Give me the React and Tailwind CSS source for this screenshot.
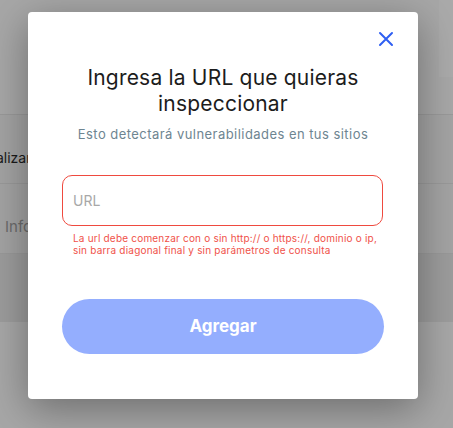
import React from 'react';

export default function App() {
    return (
        <div className="relative w-[453px] h-[428px] overflow-hidden bg-[#a7a7a7]" style={{ fontFamily: 'Inter, "Open Sans", sans-serif' }}>
            {/* Page behind the overlay */}
            <div className="flex flex-col">
                <div className="h-[114px] flex justify-end">
                    <div className="w-[14px] h-[77px] bg-[#aaaaaa]" />
                </div>
                <div className="h-[69px] border-t border-[#999999] bg-[#a3a3a3] flex items-center pt-[16px]">
                    <span className="text-[14px] text-[#1a1a1a] -ml-[22px]">Analizar</span>
                </div>
                <div className="h-[70px] border-t border-[#999999] bg-[#a3a3a3] flex items-center pt-[17px]">
                    <span className="text-[15px] text-[#6b6b6b] ml-[5px]">Información</span>
                </div>
                <div className="h-[69px] border-t border-[#999999] bg-[#9c9c9c]" />
                <div className="flex-1 bg-[#a8a8a8]" />
            </div>

            {/* Modal */}
            <div className="absolute left-[28px] top-[12px] w-[390px] h-[387px] bg-white rounded-[4px] shadow-[0_10px_40px_rgba(0,0,0,0.35)] flex flex-col px-[34px]">
                <div className="flex justify-end pt-[19px] -mr-[10px]">
                    <button className="w-[16px] h-[16px] flex items-center justify-center text-[#2f5ff2]">
                        <svg width="16" height="16" viewBox="0 0 16 16" fill="none" stroke="currentColor" strokeWidth="2" strokeLinecap="round">
                            <path d="M2 2L14 14M14 2L2 14" />
                        </svg>
                    </button>
                </div>
                <h2 className="mt-[18px] text-center text-[21px] leading-[26px] text-[#1c1c1c] font-normal tracking-[0.2px]">
                    Ingresa la URL que quieras inspeccionar
                </h2>
                <p className="mt-[9px] text-center text-[13px] leading-[17px] text-[#6e8591] tracking-[0.45px]">
                    Esto detectará vulnerabilidades en tus sitios
                </p>
                <input
                    placeholder="URL"
                    className="mt-[32px] h-[51px] w-[321px] rounded-[10px] border border-[#ef4a3f] px-[10px] text-[14px] text-[#333] placeholder:text-[#a8a8a8] outline-none"
                />
                <p className="mt-[6px] pl-[11px] -mr-[10px] text-[10px] leading-[12px] text-[#f0524a] tracking-[0.2px]">
                    La url debe comenzar con o sin http:// o https://, dominio o ip,<br />
                    sin barra diagonal final y sin parámetros de consulta
                </p>
                <button className="mt-[43px] h-[55px] w-[322px] rounded-full bg-[#94aefe] text-white text-[17px] font-bold">
                    Agregar
                </button>
            </div>
        </div>
    );
}
